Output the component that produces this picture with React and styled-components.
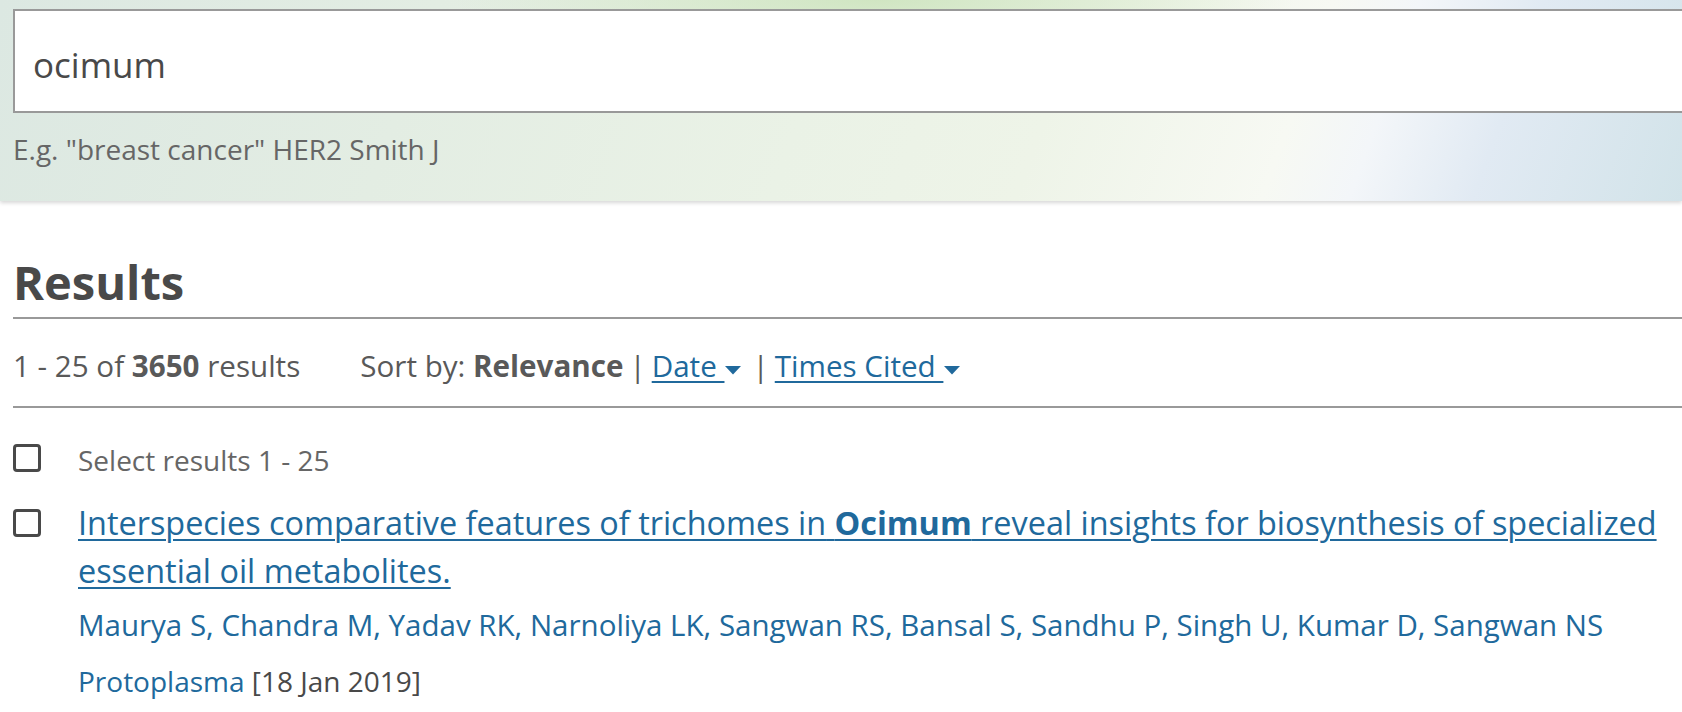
import React from "react";
import styled, { createGlobalStyle } from "styled-components";

const GlobalStyle = createGlobalStyle`
    html, body {
        margin: 0;
        padding: 0;
        background: #fff;
        overflow-x: hidden;
    }
    body {
        font-family: "Open Sans", "Noto Sans", sans-serif;
        color: #595959;
    }
`;

const authors = [
    "Maurya S",
    "Chandra M",
    "Yadav RK",
    "Narnoliya LK",
    "Sangwan RS",
    "Bansal S",
    "Sandhu P",
    "Singh U",
    "Kumar D",
    "Sangwan NS",
];

const App = () => {
    return (
        <Page>
            <GlobalStyle />
            <SearchHeader>
                <SearchBox defaultValue="ocimum" />
                <Hint>E.g. "breast cancer" HER2 Smith J</Hint>
            </SearchHeader>

            <Main>
                <Heading>Results</Heading>

                <SortBar>
                    <Count>
                        1 - 25 of <Strong>3650</Strong> results
                    </Count>
                    <Sort>
                        Sort by: <Strong>Relevance</Strong>
                        <Divider>|</Divider>
                        <SortLink href="#">
                            Date&nbsp;
                            <Caret />
                        </SortLink>
                        <Divider>|</Divider>
                        <SortLink href="#">
                            Times Cited&nbsp;
                            <Caret />
                        </SortLink>
                    </Sort>
                </SortBar>

                <Row className="select">
                    <CheckBox />
                    <SelectLabel>Select results 1 - 25</SelectLabel>
                </Row>

                <Row className="result">
                    <CheckBox />
                    <ResultBody>
                        <TitleLink href="#">
                            Interspecies comparative features of trichomes in{" "}
                            <b>Ocimum</b> reveal insights for biosynthesis of
                            specialized essential oil metabolites.
                        </TitleLink>
                        <Authors>
                            {authors.map((name, i) => (
                                <Author key={name}>
                                    {name}
                                    {i < authors.length - 1 ? ", " : ""}
                                </Author>
                            ))}
                        </Authors>
                        <Journal>
                            <span className="name">Protoplasma</span> [18 Jan
                            2019]
                        </Journal>
                    </ResultBody>
                </Row>
            </Main>
        </Page>
    );
};

const Caret = () => (
    <CaretIcon viewBox="0 0 16 9" aria-hidden="true">
        <path d="M0 0 L16 0 L8 8.5 Z" fill="#20699c" />
    </CaretIcon>
);

const Page = styled.div`
    width: 100%;
    min-height: 712px;
`;
const SearchHeader = styled.header`
    height: 201px;
    box-sizing: border-box;
    padding: 9px 0 0 13px;
    overflow: hidden;
    background: radial-gradient(
            ellipse 420px 60px at 52% 0%,
            rgba(205, 228, 190, 0.9),
            rgba(205, 228, 190, 0) 100%
        ),
        linear-gradient(
            110deg,
            #dce8e2 0%,
            #e3ede3 25%,
            #eaf2e6 48%,
            #eef4e8 62%,
            #f7f9f3 76%,
            #f3f6f9 81%,
            #e1eaf3 88%,
            #d2e3e9 100%
        );
    box-shadow: 0 2px 4px rgba(0, 0, 0, 0.16);
    position: relative;
    z-index: 1;
`;
const SearchBox = styled.input`
    display: block;
    width: calc(100% + 40px);
    height: 104px;
    box-sizing: border-box;
    border: 2px solid #999;
    border-radius: 0;
    background: #fff;
    padding: 6px 0 0 18px;
    font-family: "Open Sans", sans-serif;
    font-size: 35px;
    color: #494949;
    outline: none;
`;
const Hint = styled.p`
    margin: 17px 0 0 0;
    font-size: 28px;
    line-height: 38px;
    color: #666;
`;
const Main = styled.main`
    padding: 0 0 0 13px;
    width: 1720px;
    box-sizing: border-box;
`;
const Heading = styled.h1`
    margin: 52px 0 0 0;
    padding-bottom: 6px;
    font-size: 47px;
    line-height: 58px;
    font-weight: 700;
    color: #494949;
    border-bottom: 2px solid #999;
`;
const SortBar = styled.div`
    display: flex;
    align-items: center;
    padding: 27px 0 20px;
    font-size: 29.6px;
    line-height: 40px;
    color: #595959;
    border-bottom: 2px solid #999;
`;
const Count = styled.span`
    margin-right: 60px;
`;
const Sort = styled.span`
    display: flex;
    align-items: center;
    white-space: pre;
`;
const Strong = styled.b`
    font-weight: 700;
`;
const Divider = styled.span`
    margin: 0 6px 0 6px;
    color: #595959;
`;
const SortLink = styled.a`
    color: #20699c;
    text-decoration: underline;
    text-decoration-thickness: 2px;
    text-underline-offset: 4px;
`;
const CaretIcon = styled.svg`
    display: inline-block;
    width: 16px;
    height: 9px;
    margin: 0 5px 0 1px;
    vertical-align: 2px;
`;
const Row = styled.div`
    display: flex;
    align-items: flex-start;
    gap: 37px;
    &.select {
        margin-top: 32px;
        font-size: 28px;
        line-height: 40px;
    }
    &.result {
        margin-top: 18px;
    }
    &.result > span {
        margin-top: 11px;
    }
`;
const CheckBox = styled.span`
    flex: 0 0 auto;
    width: 28px;
    height: 28px;
    box-sizing: border-box;
    border: 3px solid #494949;
    border-radius: 4px;
    margin-top: 4px;
    background: #fff;
`;
const SelectLabel = styled.span`
    color: #666;
`;
const ResultBody = styled.div`
    display: flex;
    flex-direction: column;
    flex: 1;
    padding-right: 40px;
`;
const TitleLink = styled.a`
    font-size: 32.4px;
    line-height: 48px;
    color: #20699c;
    text-decoration: underline;
    text-decoration-thickness: 2px;
    text-underline-offset: 4px;
    b {
        font-weight: 700;
    }
`;
const Authors = styled.div`
    margin-top: 11px;
    font-size: 29.5px;
    line-height: 40px;
    color: #20699c;
`;
const Author = styled.span`
    white-space: pre;
`;
const Journal = styled.div`
    margin-top: 16px;
    font-size: 28px;
    line-height: 40px;
    color: #494949;
    .name {
        color: #20699c;
    }
`;

export default App;
